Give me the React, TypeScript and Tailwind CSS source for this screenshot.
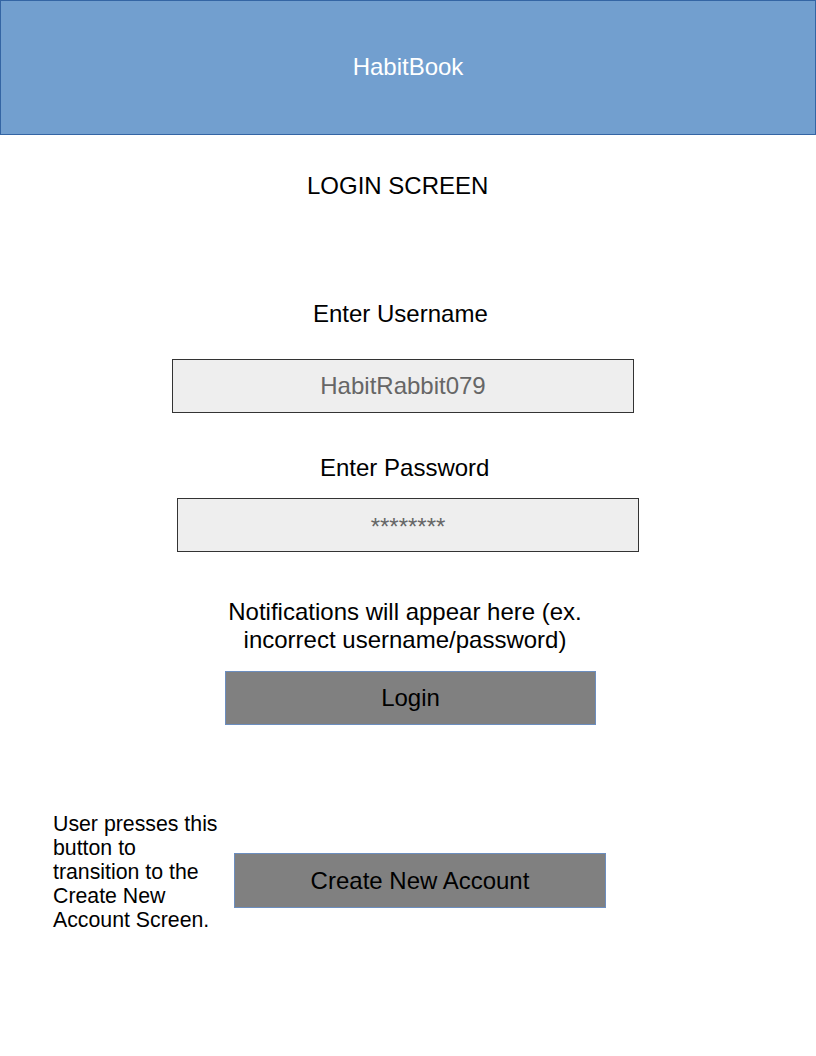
export default function App() {
  const font = { fontFamily: '"Liberation Sans", Arial, sans-serif' };
  return (
    <div className="w-[816px] h-[1056px] bg-white text-black" style={font}>
      <div className="h-[135px] bg-[#729fcf] border border-[#3465a4] flex items-center justify-center pb-[2px]">
        <span className="text-[24px] leading-[28px] text-white">HabitBook</span>
      </div>
      <div className="mt-[37px] ml-[307px] w-fit text-[24px] leading-[28px] whitespace-nowrap">LOGIN SCREEN</div>
      <div className="mt-[100px] ml-[313px] w-fit text-[24px] leading-[28px] whitespace-nowrap">Enter Username</div>
      <div className="mt-[31px] ml-[172px] w-[462px] h-[54px] bg-[#eeeeee] border border-[#333333] flex items-center justify-center text-[24px] text-[#666666]">
        HabitRabbit079
      </div>
      <div className="mt-[41px] ml-[320px] w-fit text-[24px] leading-[28px] whitespace-nowrap">Enter Password</div>
      <div className="mt-[16px] ml-[177px] w-[462px] h-[54px] bg-[#eeeeee] border border-[#333333] flex items-center justify-center text-[24px] leading-[28px] text-[#666666] pt-[4px]">
        ********
      </div>
      <div className="mt-[46px] ml-[205px] w-[400px] text-center text-[24px] leading-[28px]">
        Notifications will appear here (ex.
        <br />
        incorrect username/password)
      </div>
      <div className="mt-[17px] ml-[225px] w-[371px] h-[54px] bg-[#808080] border border-[#6c8ebf] flex items-center justify-center text-[24px]">
        Login
      </div>
      <div className="mt-[87px] flex items-start">
        <div className="ml-[53px] w-[170px] text-[21.3px] leading-[24px]">
          User presses this button to transition to the Create New Account Screen.
        </div>
        <div className="mt-[41px] ml-[11px] w-[372px] h-[55px] bg-[#808080] border border-[#6c8ebf] flex items-center justify-center text-[24px]">
          Create New Account
        </div>
      </div>
    </div>
  );
}
